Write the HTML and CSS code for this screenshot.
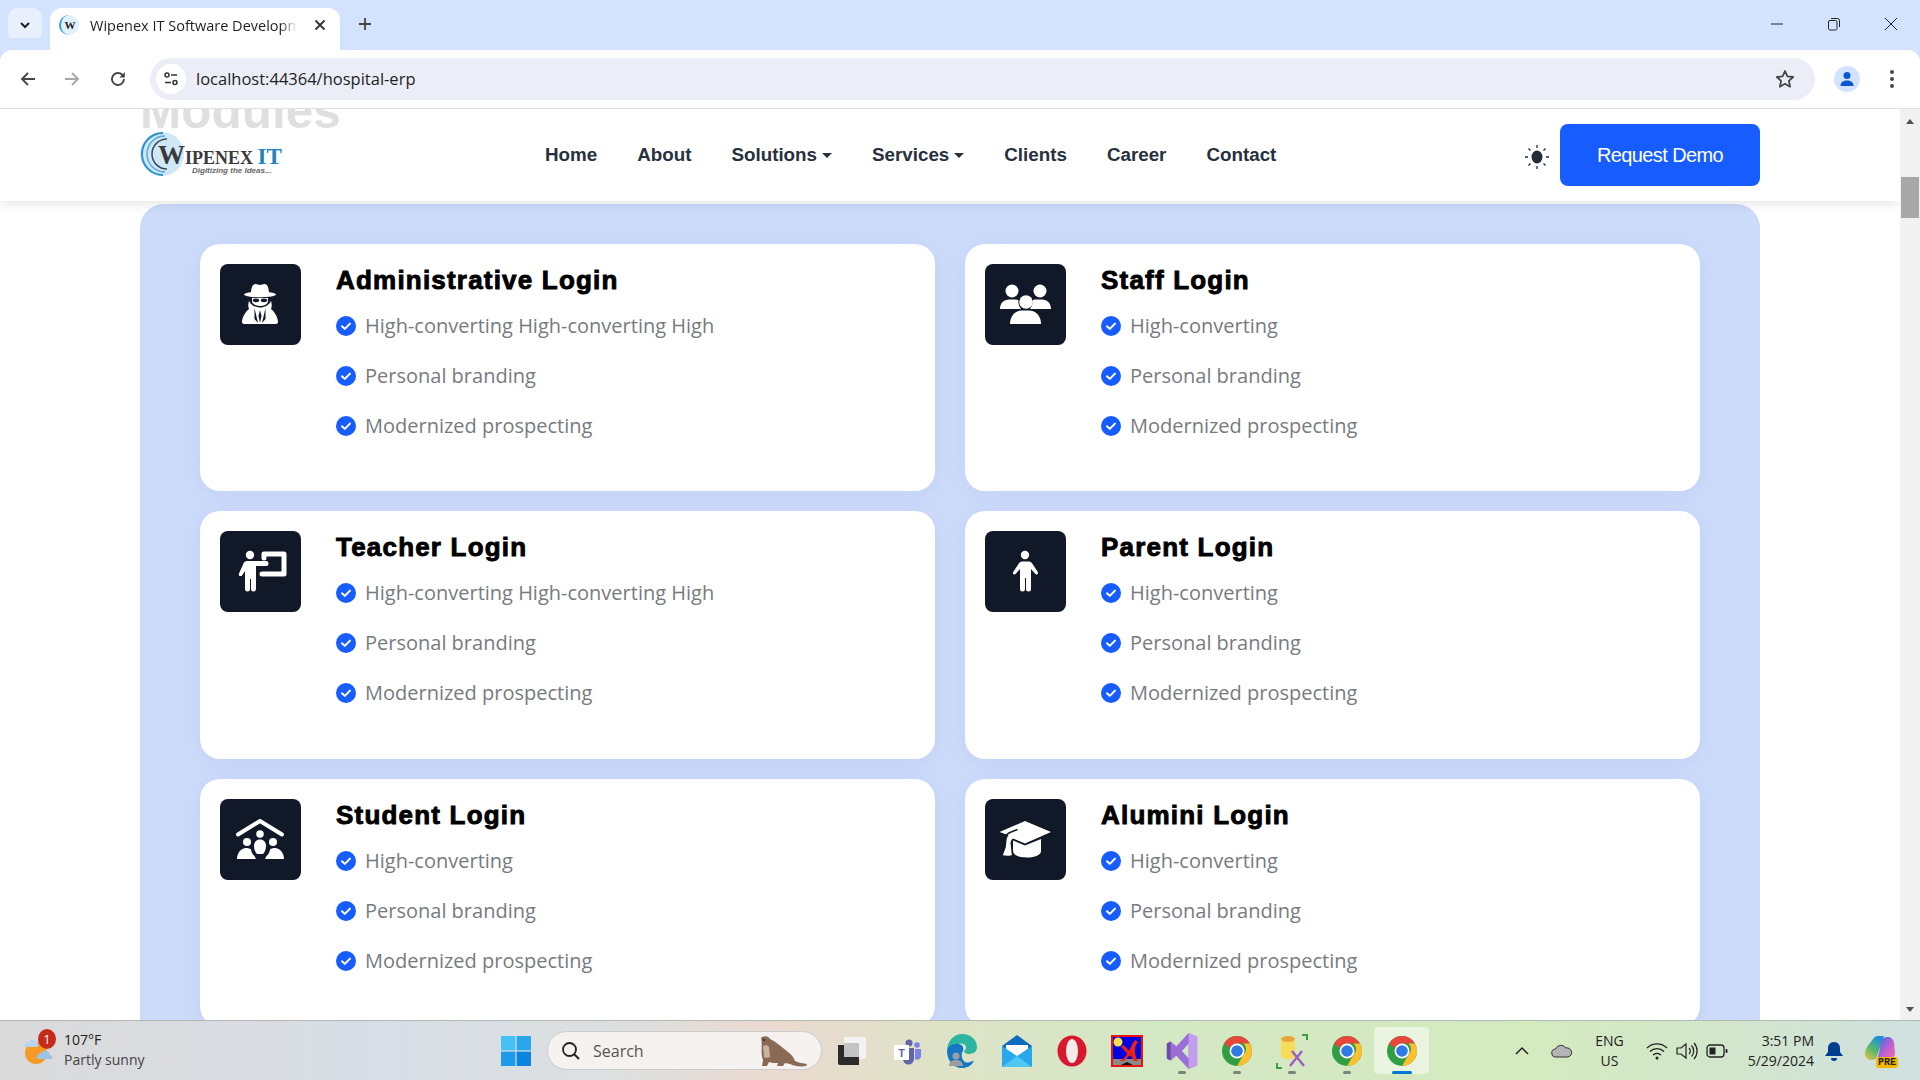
FILE: index.html
```html
<!DOCTYPE html>
<html lang="en">
<head>
    <meta charset="UTF-8">
    <meta name="viewport" content="width=device-width, initial-scale=1.0">
    <title>Wipenex IT Software Development</title>
    <link rel="stylesheet" href="styles.css">
</head>
<body>

    <svg class="defs" width="0" height="0">
        <symbol id="check" viewBox="0 0 20 20">
            <circle cx="10" cy="10" r="10" fill="#175cff"/>
            <path d="M6 10.2l2.8 2.7L14 7.6" fill="none" stroke="#fff" stroke-width="2" stroke-linecap="round" stroke-linejoin="round"/>
        </symbol>
        <symbol id="chrome" viewBox="0 0 32 32">
            <circle cx="16" cy="16" r="15" fill="#2f9e44"/>
            <path d="M3 8.5A15 15 0 0 1 29 8.5H16a7.5 7.5 0 0 0-7 4.6z" fill="#e8453c"/>
            <path d="M29 8.5A15 15 0 0 1 16 31l6.500-11.200A7.500 7.500 0 0 0 22.500 8.500z" fill="#fbc02d"/>
            <circle cx="16" cy="16" r="7.500" fill="#fff"/>
            <circle cx="16" cy="16" r="5.800" fill="#2f7ae5"/>
        </symbol>
    </svg>

    <header class="tabstrip">
        <div class="tab-list-btn">
            <svg width="14" height="14" viewBox="0 0 14 14"><path d="M3 5l4 4 4-4" fill="none" stroke="#1f1f1f" stroke-width="2"/></svg>
        </div>
        <div class="tab">
            <span class="favicon">W</span>
            <span class="tab-title">Wipenex IT Software Development</span>
            <svg class="tab-close" width="12" height="12" viewBox="0 0 12 12"><path d="M1.500 1.500l9 9M10.500 1.500l-9 9" stroke="#333" stroke-width="1.800"/></svg>
        </div>
        <svg class="new-tab" width="14" height="14" viewBox="0 0 14 14"><path d="M7 1v12M1 7h12" stroke="#444" stroke-width="1.800"/></svg>
        <div class="window-btns">
            <svg width="14" height="14" viewBox="0 0 14 14"><path d="M1 7h12" stroke="#222" stroke-width="1"/></svg>
            <svg width="14" height="14" viewBox="0 0 14 14"><rect x="1.500" y="3.500" width="8.500" height="9.500" rx="1.500" fill="none" stroke="#222"/><path d="M4 1.500h6.500a2 2 0 0 1 2 2V10" fill="none" stroke="#222"/></svg>
            <svg width="14" height="14" viewBox="0 0 14 14"><path d="M1 1l12 12M13 1L1 13" stroke="#222" stroke-width="1"/></svg>
        </div>
    </header>

    <div class="toolbar">
        <svg class="tool" width="18" height="18" viewBox="0 0 18 18"><path d="M16 9H3M9 3L3 9l6 6" fill="none" stroke="#474747" stroke-width="1.900"/></svg>
        <svg class="tool" width="18" height="18" viewBox="0 0 18 18"><path d="M2 9h13M9 3l6 6-6 6" fill="none" stroke="#a8a8a8" stroke-width="1.900"/></svg>
        <svg class="tool tool-reload" width="18" height="18" viewBox="0 0 18 18"><path d="M15 9a6 6 0 1 1-1.800-4.300L15 6.500" fill="none" stroke="#474747" stroke-width="1.900"/><path d="M15.800 2v5.500h-5.500z" fill="#474747"/></svg>
        <div class="urlbar">
            <span class="site-info">
                <svg width="16" height="16" viewBox="0 0 16 16"><circle cx="4" cy="4" r="2" fill="none" stroke="#333" stroke-width="1.500"/><path d="M8 4h6M2 11.500h6" stroke="#333" stroke-width="1.500"/><circle cx="12" cy="11.500" r="2" fill="none" stroke="#333" stroke-width="1.500"/></svg>
            </span>
            <span class="url">localhost:44364/hospital-erp</span>
            <svg class="star" width="20" height="20" viewBox="0 0 20 20"><path d="M10 2l2.400 5.400 5.800.6-4.300 3.900 1.200 5.800L10 14.700l-5.100 3 1.200-5.800L1.800 8l5.800-.6z" fill="none" stroke="#474747" stroke-width="1.800" stroke-linejoin="round"/></svg>
        </div>
        <div class="avatar">
            <svg width="16" height="16" viewBox="0 0 16 16"><circle cx="8" cy="4.500" r="3.500" fill="#0b57d0"/><path d="M1.500 15c0-4 3-5.500 6.500-5.500s6.500 1.500 6.500 5.500z" fill="#0b57d0"/></svg>
        </div>
        <div class="dots"><i></i><i></i><i></i></div>
    </div>

    <div class="viewport">
        <div class="page">
            <nav class="nav">
                <h1 class="behind-title">Modules</h1>
                <div class="logo">
                    <svg class="logo-mark" width="46" height="46" viewBox="0 0 46 46">
                        <circle cx="23" cy="23" r="22" fill="#cfe8f8"/>
                        <path d="M24 2A21 21 0 0 0 24 44" fill="none" stroke="#2b8fc9" stroke-width="2"/>
                        <path d="M26 5A18 18 0 0 0 26 41" fill="none" stroke="#5aa9d8" stroke-width="1.500"/>
                        <path d="M28 8A15 15 0 0 0 28 38" fill="none" stroke="#3b4a57" stroke-width="1.500"/>
                    </svg>
                    <div class="logo-text">
                        <div class="logo-name"><span class="logo-big">W</span>IPENEX <span class="logo-it">IT</span></div>
                        <div class="logo-tag">Digitizing the Ideas...</div>
                    </div>
                </div>
                <ul class="nav-links">
                    <li>Home</li>
                    <li>About</li>
                    <li class="has-caret">Solutions</li>
                    <li class="has-caret">Services</li>
                    <li>Clients</li>
                    <li>Career</li>
                    <li>Contact</li>
                </ul>
                <div class="nav-right">
                    <svg class="sun" width="24" height="24" viewBox="0 0 24 24">
                        <ellipse cx="12" cy="12" rx="5.500" ry="6.500" fill="#222b36"/>
                        <path d="M12 0v3M12 21v3M0 12h3M21 12h3M3.500 3.500l2 2M18.500 18.500l2 2M3.500 20.500l2-2M18.500 5.500l2-2" stroke="#222b36" stroke-width="1.300"/>
                    </svg>
                    <a class="btn-demo">Request Demo</a>
                </div>
            </nav>

            <main class="panel">
                <section class="card">
                    <div class="card-icon">
                        <svg viewBox="0 0 81 81" width="81" height="81" fill="#fff">
                            <path d="M31 30c0-6 1.500-10 4.500-10 2 0 2.800 1 4.500 1s2.500-1 4.500-1c3 0 4.500 4 4.500 10z"/>
                            <ellipse cx="40" cy="30.500" rx="16" ry="2.800"/>
                            <path d="M32 34h16v3c0 3-4 5-8 5s-8-2-8-5z"/>
                            <ellipse cx="36" cy="36.300" rx="3.200" ry="1.900" fill="#111827"/>
                            <ellipse cx="44" cy="36.300" rx="3.200" ry="1.900" fill="#111827"/>
                            <path d="M29 37c-1 3-1 5.500 0 8-4 3-7 9-7 13 0 1 1 2 2 2h32c1 0 2-1 2-2 0-4-3-10-7-13 1-2.500 1-5 0-8-2 4-6 6.500-11 6.500S31 41 29 37z"/>
                            <path d="M34.500 44l3.500 15-3.500-4zM45.500 44L42 59l3.500-4zM40 46l1.500 6-1.500 7-1.500-7z" fill="#111827"/>
                        </svg>
                    </div>
                    <div class="card-body">
                        <h3>Administrative Login</h3>
                        <ul class="ticks">
                            <li><svg class="tick"><use href="#check"/></svg>High-converting High-converting High</li>
                            <li><svg class="tick"><use href="#check"/></svg>Personal branding</li>
                            <li><svg class="tick"><use href="#check"/></svg>Modernized prospecting</li>
                        </ul>
                    </div>
                </section>

                <section class="card">
                    <div class="card-icon">
                        <svg viewBox="0 0 81 81" width="81" height="81" fill="#fff">
                            <circle cx="27" cy="27" r="6.500"/>
                            <circle cx="55" cy="27" r="6.500"/>
                            <path d="M15 45c0-6 4-9.500 9-9.500h6c2 0 3 .500 3.500 1-.5 3 .500 6 2.500 8.500zM66 45c0-6-4-9.500-9-9.500h-6c-2 0-3 .500-3.500 1 .5 3-.500 6-2.500 8.500z"/>
                            <circle cx="41" cy="38" r="6.800"/>
                            <path d="M25 60c0-8 5-13.500 12-13.500h7c7 0 12 5.500 12 13.500z"/>
                        </svg>
                    </div>
                    <div class="card-body">
                        <h3>Staff Login</h3>
                        <ul class="ticks">
                            <li><svg class="tick"><use href="#check"/></svg>High-converting</li>
                            <li><svg class="tick"><use href="#check"/></svg>Personal branding</li>
                            <li><svg class="tick"><use href="#check"/></svg>Modernized prospecting</li>
                        </ul>
                    </div>
                </section>

                <section class="card">
                    <div class="card-icon">
                        <svg viewBox="0 0 81 81" width="81" height="81">
                            <path d="M44 27v-4h20v20H42" fill="none" stroke="#fff" stroke-width="5" stroke-linejoin="round" stroke-linecap="round"/>
                            <circle cx="30" cy="24" r="4.200" fill="#fff"/>
                            <path d="M27 30h19a2.500 2.500 0 0 1 0 5H36v23a2.500 2.500 0 0 1-5 0V48h-1v10a2.500 2.500 0 0 1-5 0V40l-3 4.500c-1.500 1.500-4 0-3-2l4-9c.800-2 2-3.500 4-3.500z" fill="#fff"/>
                        </svg>
                    </div>
                    <div class="card-body">
                        <h3>Teacher Login</h3>
                        <ul class="ticks">
                            <li><svg class="tick"><use href="#check"/></svg>High-converting High-converting High</li>
                            <li><svg class="tick"><use href="#check"/></svg>Personal branding</li>
                            <li><svg class="tick"><use href="#check"/></svg>Modernized prospecting</li>
                        </ul>
                    </div>
                </section>

                <section class="card">
                    <div class="card-icon">
                        <svg viewBox="0 0 81 81" width="81" height="81" fill="#fff">
                            <circle cx="40" cy="24" r="4.200"/>
                            <path d="M36 30.500h8c1.500 0 2.500 1 3.200 2l5.600 8.500c1 1.800-1.200 3.300-2.600 1.800L46 38v20a2.500 2.500 0 0 1-5 0V47h-1v11a2.500 2.500 0 0 1-5 0V38l-4.200 4.800c-1.400 1.500-3.600 0-2.600-1.800l5.600-8.500c.7-1 1.700-2 3.200-2z"/>
                        </svg>
                    </div>
                    <div class="card-body">
                        <h3>Parent Login</h3>
                        <ul class="ticks">
                            <li><svg class="tick"><use href="#check"/></svg>High-converting</li>
                            <li><svg class="tick"><use href="#check"/></svg>Personal branding</li>
                            <li><svg class="tick"><use href="#check"/></svg>Modernized prospecting</li>
                        </ul>
                    </div>
                </section>

                <section class="card">
                    <div class="card-icon">
                        <svg viewBox="0 0 81 81" width="81" height="81" fill="#fff">
                            <path d="M18 35.500L40 22l22 13.500" fill="none" stroke="#fff" stroke-width="4" stroke-linecap="round" stroke-linejoin="round"/>
                            <circle cx="40" cy="35" r="3.800"/>
                            <path d="M34 47c0-4 2.500-6.500 6-6.500s6 2.500 6 6.500c0 4-2 7-3 8h-6c-1-1-3-4-3-8z"/>
                            <circle cx="27" cy="43" r="4"/>
                            <circle cx="53" cy="43" r="4"/>
                            <path d="M17 60c0-6 4-11 9-11 2 0 4 .500 5 1.500.5 3 1.500 5 3.500 6.500l1.500 3zM64 60c0-6-4-11-9-11-2 0-4 .500-5 1.500-.5 3-1.500 5-3.500 6.500l-1.500 3z"/>
                        </svg>
                    </div>
                    <div class="card-body">
                        <h3>Student Login</h3>
                        <ul class="ticks">
                            <li><svg class="tick"><use href="#check"/></svg>High-converting</li>
                            <li><svg class="tick"><use href="#check"/></svg>Personal branding</li>
                            <li><svg class="tick"><use href="#check"/></svg>Modernized prospecting</li>
                        </ul>
                    </div>
                </section>

                <section class="card">
                    <div class="card-icon">
                        <svg viewBox="0 0 81 81" width="81" height="81" fill="#fff">
                            <path d="M40 22l26 11-26 11.500-12-5c-1.500 1-2.300 2.500-2.500 4.500l1.300 12c0 .800-5.800 1-9 .300l3-8 .7-7c.2-2 1-4 2-5l-9-3.300z"/>
                            <path d="M19.500 37c4-3 8-5 13-6.500" fill="none" stroke="#111827" stroke-width="1.500"/>
                            <path d="M28 41.500l12 5 16-6.500v12c0 4-6 6.500-14 6.500-8 0-14-2.500-14-6.500z"/>
                        </svg>
                    </div>
                    <div class="card-body">
                        <h3>Alumini Login</h3>
                        <ul class="ticks">
                            <li><svg class="tick"><use href="#check"/></svg>High-converting</li>
                            <li><svg class="tick"><use href="#check"/></svg>Personal branding</li>
                            <li><svg class="tick"><use href="#check"/></svg>Modernized prospecting</li>
                        </ul>
                    </div>
                </section>
            </main>
        </div>

        <div class="scrollbar">
            <span class="arrow-up"></span>
            <span class="thumb"></span>
            <span class="arrow-down"></span>
        </div>
    </div>

    <footer class="taskbar">
        <div class="weather">
            <span class="weather-icon">
                <svg width="32" height="34" viewBox="0 0 32 34">
                    <circle cx="12" cy="20" r="11" fill="#f59a23"/>
                    <path d="M1 14a4 4 0 0 1 4-5 5 5 0 0 1 9 2v3z" fill="#b8d4ee"/>
                    <path d="M13 25a4 4 0 0 1 4-5 5 5 0 0 1 9 2 3 3 0 0 1 2 4H13z" fill="#9cc3e8"/>
                </svg>
                <b class="badge">1</b>
            </span>
            <div class="weather-text">
                <div>107°F</div>
                <div class="weather-sub">Partly sunny</div>
            </div>
        </div>
        <svg class="win-logo" width="30" height="30" viewBox="0 0 30 30">
            <path d="M0 0h14.400v14.400H0z" fill="#45c1f5"/>
            <path d="M15.600 0H30v14.400H15.600z" fill="#2aa6ee"/>
            <path d="M0 15.600h14.400V30H0z" fill="#1d9aea"/>
            <path d="M15.600 15.600H30V30H15.600z" fill="#0a84dc"/>
        </svg>
        <div class="search">
            <svg width="20" height="20" viewBox="0 0 20 20"><circle cx="8.500" cy="8.500" r="6.500" fill="none" stroke="#222" stroke-width="1.800"/><path d="M13 13l5 5" stroke="#222" stroke-width="2"/></svg>
            <span>Search</span>
            <svg class="otter" width="54" height="34" viewBox="0 0 54 34">
                <path d="M6 4c3-3 8-2 9 1 5 2 12 8 18 13 4 3 6 6 7 9 4 2 8 2 12 3l-1 2c-6 1-12 0-16-2l-5-1-2 3h-6l1-3c-3 0-7 0-9-1l-2 4H7l1-6C5 17 8 12 6 4z" fill="#8a6a55"/>
                <path d="M8 12c2-1 5-1 6 1l1 10c-2 1-5 1-6 0z" fill="#c8b3a2"/>
                <circle cx="9" cy="6" r="1" fill="#222"/>
            </svg>
        </div>

        <div class="apps">
            <span class="app">
                <svg width="32" height="32" viewBox="0 0 32 32"><rect x="8" y="2" width="22" height="22" rx="2" fill="#f3f3f3"/><path d="M2 10h21v20H4a2 2 0 0 1-2-2z" fill="#2b2b2b"/><path d="M8 8h15v14H8z" fill="#c4c4c4"/></svg>
            </span>
            <span class="app">
                <svg width="32" height="32" viewBox="0 0 32 32"><circle cx="18" cy="8" r="3.500" fill="#6264a7"/><circle cx="26" cy="10" r="2.800" fill="#7b83eb"/><path d="M12 13h11v11a5.500 5.500 0 0 1-11 0z" fill="#6264a7"/><path d="M24 14h6v8a4 4 0 0 1-6 2z" fill="#7b83eb"/><rect x="3" y="10" width="15" height="15" fill="#fff"/><text class="teams-t" x="10.500" y="22">T</text></svg>
            </span>
            <span class="app">
                <svg width="32" height="36" viewBox="0 0 32 36"><path d="M1 18C1 8 8 1 16 1c9 0 15 6 15 13 0 5-4 7-8 7-3 0-5-1-5-3 2-1 3-3 1-6-2-2-6-2-9 0-4 2-7 4-9 6z" fill="#2cb5a0"/><path d="M1 18c1-5 6-8 12-7 4 1 5 4 4 7-3 3-1 14 7 11 2-1 3-1 4-1-3 5-7 7-12 7C8 35 1 28 1 18z" fill="#1476c6"/><circle cx="10" cy="23" r="3.500" fill="#9e9e9e"/><path d="M3 33c0-4 3-6 7-6s7 2 7 6z" fill="#9e9e9e"/></svg>
            </span>
            <span class="app">
                <svg width="32" height="34" viewBox="0 0 32 34"><path d="M1 12L16 1l15 11v21H1z" fill="#0f6cbd"/><path d="M5 11h22v8l-11 6-11-6z" fill="#fff"/><path d="M1 12l15 10 15-10v21H1z" fill="#28a8ea"/><path d="M1 33l15-11 15 11z" fill="#50c6f2"/></svg>
            </span>
            <span class="app">
                <svg width="30" height="32" viewBox="0 0 30 32"><ellipse cx="15" cy="16" rx="14.500" ry="15.500" fill="#d8182d"/><ellipse cx="15" cy="16" rx="6" ry="12" fill="#f5eaea"/></svg>
            </span>
            <span class="app">
                <svg width="32" height="32" viewBox="0 0 32 32"><rect x="1" y="1" width="30" height="30" fill="#0000e0" stroke="#ee1111" stroke-width="2"/><circle cx="7" cy="7" r="4.500" fill="#f4e04d"/><path d="M2 24h28v6H2z" fill="#8a8a8a"/><path d="M8 26c6-2 8-7 11-12 2-4 3-7 5-9l3 2c-3 3-4 8-2 15l2 4h-4c-2-3-3-6-3-9-2 3-4 7-7 9z" fill="#ee2211"/><path d="M12 10c3 2 6 5 9 10l-2 2c-3-4-6-7-9-10z" fill="#ee2211"/><path d="M10 30l6-3 6 3z" fill="#111"/></svg>
            </span>
            <span class="app has-dot">
                <svg width="32" height="36" viewBox="0 0 32 38"><path d="M23 0l9 4v30l-9 4-13-14-6 5-4-2V11l4-2 6 5zM23 11l-7 8 7 8z" fill="#9a6fd6"/><path d="M23 0l9 4v30l-9 4z" fill="#c39df0"/><path d="M0 11l4-2v20l-4-2z" fill="#6a4aa8"/></svg>
            </span>
            <span class="app has-dot"><svg width="32" height="32"><use href="#chrome"/></svg></span>
            <span class="app has-dot">
                <svg width="34" height="36" viewBox="0 0 34 36"><path d="M6 6c0-2 3-3 7-3s7 1 7 3v17c0 2-3 3-7 3s-7-1-7-3z" fill="#f6dc58"/><ellipse cx="13" cy="6" rx="7" ry="3" fill="#e6a33e"/><path d="M27 2h5v5M2 30v5h5" fill="none" stroke="#3f9b3f" stroke-width="2"/><path d="M15 33l12-15M29 33L17 18" stroke="#a060c0" stroke-width="2.500"/></svg>
            </span>
            <span class="app has-dot"><svg width="32" height="32"><use href="#chrome"/></svg></span>
            <span class="app is-active"><svg width="32" height="32"><use href="#chrome"/></svg></span>
        </div>

        <div class="tray">
            <svg class="tray-caret" width="14" height="10" viewBox="0 0 14 10"><path d="M1 8l6-6 6 6" fill="none" stroke="#222" stroke-width="1.500"/></svg>
            <svg class="tray-cloud" width="22" height="14" viewBox="0 0 22 14"><path d="M5 13a4 4 0 0 1-.5-8A6 6 0 0 1 15 4a4.500 4.500 0 0 1 2 9z" fill="#b4b4b4" stroke="#333"/></svg>
            <div class="lang">ENG<br>US</div>
            <div class="status-icons">
                <svg width="22" height="18" viewBox="0 0 22 18"><path d="M1 6a14 14 0 0 1 20 0M4 9.500a10 10 0 0 1 14 0M7 13a6 6 0 0 1 8 0" fill="none" stroke="#222" stroke-width="1.300"/><circle cx="11" cy="16" r="1.500" fill="#222"/></svg>
                <svg width="22" height="18" viewBox="0 0 22 18"><path d="M1 6h4l5-4v14l-5-4H1z" fill="none" stroke="#222" stroke-width="1.200"/><path d="M13 6a4 4 0 0 1 0 6M15.500 3.500a8 8 0 0 1 0 11M18 1a12 12 0 0 1 0 16" fill="none" stroke="#222" stroke-width="1.200"/></svg>
                <svg width="22" height="14" viewBox="0 0 22 14"><rect x="1" y="1" width="17" height="12" rx="3" fill="none" stroke="#222" stroke-width="1.300"/><rect x="3.500" y="3.500" width="6" height="7" fill="#222"/><rect x="19.500" y="5" width="2" height="4" rx="1" fill="#222"/></svg>
            </div>
            <div class="clock"><div>3:51 PM</div><div>5/29/2024</div></div>
            <svg class="bell" width="18" height="20" viewBox="0 0 18 20"><path d="M9 1c-4 0-6 3-6 6v4l-3 4h18l-3-4V7c0-3-2-6-6-6z" fill="#003e92"/><path d="M6 17a3 3 0 0 0 6 0z" fill="#003e92"/></svg>
            <span class="copilot">
                <svg width="30" height="26" viewBox="0 0 30 26">
                    <defs>
                        <linearGradient id="cpA" x1="0" y1="1" x2="0.600" y2="0"><stop offset="0" stop-color="#f5c242"/><stop offset=".5" stop-color="#58b86a"/><stop offset="1" stop-color="#1e8fe0"/></linearGradient>
                        <linearGradient id="cpB" x1="0" y1="0" x2="1" y2="1"><stop offset="0" stop-color="#2a6fe0"/><stop offset=".6" stop-color="#c85fd0"/><stop offset="1" stop-color="#f06a9a"/></linearGradient>
                    </defs>
                    <path d="M8 3c1-2 3-3 5-3h6l-7 20c-1 3-3 4-5 4-4 0-7-2-7-6 0-3 1-5 2-7z" fill="url(#cpA)"/>
                    <path d="M16 6c1-3 3-5 6-5h1c3 0 5 2 6 5l1 11c0 4-3 6-6 6H12c2-4 3-12 4-17z" fill="url(#cpB)"/>
                </svg>
                <b class="pre">PRE</b>
            </span>
        </div>
    </footer>

</body>
</html>
```

FILE: styles.css
```css
* {
    box-sizing: border-box;
}
html, body {
    margin: 0;
    height: 100%;
}
body {
    display: flex;
    flex-direction: column;
    height: 100vh;
    overflow: hidden;
    font-family: "Open Sans", sans-serif;
    background: #fff;
}
ul {
    list-style: none;
    margin: 0;
    padding: 0;
}
.defs {
    position: absolute;
}

/* browser tabs */
.tabstrip {
    display: flex;
    align-items: flex-end;
    flex: 0 0 50px;
    background: #d3e3fd;
    padding-left: 8px;
}
.tab-list-btn {
    display: flex;
    align-items: center;
    justify-content: center;
    align-self: flex-start;
    width: 34px;
    height: 34px;
    margin-top: 8px;
    border-radius: 10px;
    background: #e9f0fd;
}
.tab {
    position: relative;
    display: flex;
    align-items: center;
    width: 290px;
    height: 42px;
    margin-left: 8px;
    padding: 0 14px 8px 9px;
    border-radius: 12px 12px 0 0;
    background: #fff;
}
.favicon {
    flex: 0 0 20px;
    height: 20px;
    margin-right: 11px;
    border-radius: 50%;
    border-left: 2px solid #3c9ad6;
    background: #dff0fb;
    font: bold 11px/20px "Liberation Serif", serif;
    text-align: center;
    color: #222;
}
.tab-title {
    flex: 1;
    overflow: hidden;
    white-space: nowrap;
    font-size: 14.500px;
    color: #1f1f1f;
    -webkit-mask-image: linear-gradient(90deg, #000 92%, transparent);
    mask-image: linear-gradient(90deg, #000 92%, transparent);
}
.tab-close {
    margin-left: 17px;
}
.new-tab {
    align-self: flex-start;
    margin: 17px 0 0 18px;
}
.window-btns {
    display: flex;
    gap: 43px;
    align-self: flex-start;
    margin: 17px 22px 0 auto;
}

/* browser toolbar */
.toolbar {
    display: flex;
    align-items: center;
    flex: 0 0 59px;
    padding: 0 0 1px 19px;
    border-bottom: 1px solid #e0e0e0;
    border-radius: 12px 12px 0 0;
    background: #fff;
    box-shadow: 0 -12px 0 #d3e3fd;
}
.tool {
    margin-right: 26px;
}
.tool-reload {
    margin-left: 2px;
}
.urlbar {
    display: flex;
    align-items: center;
    width: 1665px;
    height: 42px;
    margin-left: -3px;
    padding: 0 20px 0 6px;
    border-radius: 21px;
    background: #ebeef7;
}
.site-info {
    display: flex;
    align-items: center;
    justify-content: center;
    width: 30px;
    height: 30px;
    border-radius: 50%;
    background: #fff;
}
.url {
    margin-left: 10px;
    font-size: 16.500px;
    color: #1f1f1f;
}
.star {
    margin-left: auto;
}
.avatar {
    display: flex;
    align-items: center;
    justify-content: center;
    width: 26px;
    height: 26px;
    margin-left: 19px;
    border-radius: 50%;
    background: #d3e3fd;
}
.dots {
    display: flex;
    flex-direction: column;
    gap: 3px;
    margin-left: 30px;
}
.dots i {
    width: 4px;
    height: 4px;
    border-radius: 50%;
    background: #474747;
}

/* page */
.viewport {
    display: flex;
    flex: 1;
    min-height: 0;
}
.page {
    flex: 1;
    overflow: hidden;
    background: #fff;
}
.nav {
    position: relative;
    z-index: 2;
    display: flex;
    align-items: center;
    height: 92px;
    padding: 0 140px;
    background: rgba(255, 255, 255, 0.9);
    box-shadow: 0 2px 12px rgba(0, 0, 0, 0.12);
}
.behind-title {
    position: absolute;
    left: 140px;
    top: -17px;
    z-index: -1;
    margin: 0;
    font: bold 49.500px/38px "Liberation Sans", Arial, sans-serif;
    color: #dfdfdf;
}
.logo {
    display: flex;
    align-items: flex-start;
    width: 142px;
    height: 46px;
    margin-right: 263px;
    margin-top: -2px;
    margin-left: -1px;
}
.logo-mark {
    flex: 0 0 46px;
}
.logo-text {
    margin-left: -27px;
    padding-top: 14px;
    white-space: nowrap;
}
.logo-name {
    font: bold 18px/20px "Liberation Serif", serif;
    color: #3a3a3a;
}
.logo-big {
    font-size: 27px;
}
.logo-it {
    font-size: 23px;
    color: #2384bd;
}
.logo-tag {
    margin: -2px 0 0 34px;
    font: italic bold 8px/10px "Liberation Sans", sans-serif;
    color: #666;
}
.nav-links {
    display: flex;
    gap: 40px;
    margin-left: 1px;
    font: bold 18.800px "Liberation Sans", Arial, sans-serif;
    color: #27303d;
}
.has-caret::after {
    content: "";
    display: inline-block;
    margin-left: 5px;
    vertical-align: 3px;
    border-top: 5px solid #27303d;
    border-left: 5px solid transparent;
    border-right: 5px solid transparent;
}
.nav-right {
    display: flex;
    align-items: center;
    margin-left: auto;
}
.sun {
    margin: 4px 11px 0 0;
}
.btn-demo {
    display: flex;
    align-items: center;
    justify-content: center;
    width: 200px;
    height: 62px;
    border-radius: 8px;
    background: #175cff;
    font: 20px "Liberation Sans", Arial, sans-serif;
    letter-spacing: -0.600px;
    color: #fff;
}

/* login cards */
.panel {
    display: grid;
    grid-template-columns: 735px 735px;
    grid-template-rows: 247px 248px 247px;
    gap: 20px 30px;
    height: 900px;
    margin: 3px 140px 0;
    padding: 40px 60px;
    border-radius: 24px 24px 0 0;
    background: #cddbfb;
}
.card {
    display: flex;
    gap: 35px;
    padding: 20px;
    border-radius: 20px;
    background: #fff;
    box-shadow: 0 4px 24px rgba(40, 60, 120, 0.06);
}
.card-icon {
    flex: 0 0 81px;
    height: 81px;
    border-radius: 8px;
    background: #111827;
}
.card-icon svg {
    display: block;
}
.card h3 {
    margin: 0 0 16px;
    font: bold 26px/32px "Liberation Sans", Arial, sans-serif;
    letter-spacing: 1.200px;
    color: #000;
    -webkit-text-stroke: 0.900px #000;
}
.ticks {
    font-size: 20px;
    line-height: 28px;
    color: #777b80;
}
.ticks li {
    display: flex;
    align-items: center;
    gap: 9px;
    margin-bottom: 21.800px;
}
.tick {
    flex: 0 0 20px;
    width: 20px;
    height: 20px;
}

/* page scrollbar */
.scrollbar {
    position: relative;
    flex: 0 0 20px;
    background: #f1f1f1;
}
.thumb {
    position: absolute;
    left: 1px;
    right: 1px;
    top: 68px;
    height: 41px;
    background: #a8a8a8;
}
.arrow-up, .arrow-down {
    position: absolute;
    left: 6px;
    border-left: 4px solid transparent;
    border-right: 4px solid transparent;
}
.arrow-up {
    top: 10px;
    border-bottom: 5px solid #505050;
}
.arrow-down {
    bottom: 8px;
    border-top: 5px solid #505050;
}

/* windows taskbar */
.taskbar {
    display: flex;
    align-items: center;
    flex: 0 0 60px;
    border-top: 1px solid #b4b8b2;
    background: linear-gradient(90deg, #dadada 0%, #d8dde6 20%, #dce0e0 32%, #ead9d0 40%, #e0e2c8 48%, #d3e8c4 60%, #d4eabf 80%, #d2e5cf 92%, #cfe0e0 100%);
    font-size: 14px;
    color: #222;
}
.weather {
    display: flex;
    align-items: center;
    flex: 0 0 501px;
    padding-left: 24px;
}
.weather-icon {
    position: relative;
    width: 40px;
    height: 36px;
}
.badge {
    position: absolute;
    left: 14px;
    top: -4px;
    width: 18px;
    height: 20px;
    border-radius: 50%;
    background: #c42b1c;
    font: 13px/20px "Open Sans", sans-serif;
    text-align: center;
    color: #fff;
}
.weather-text {
    margin-top: -2px;
    line-height: 20px;
    font-size: 14px;
}
.weather-sub {
    color: #444;
}
.search {
    display: flex;
    align-items: center;
    flex: 0 0 275px;
    height: 39px;
    margin-left: 16px;
    padding: 0 12px 0 13px;
    border: 1px solid #ccc;
    border-radius: 20px;
    background: #f5f2ef;
    font-size: 16px;
    color: #555;
}
.search span {
    margin-left: 12px;
}
.otter {
    margin-left: auto;
}
.apps {
    display: flex;
    margin-left: 2px;
}
.app {
    position: relative;
    display: flex;
    align-items: center;
    justify-content: center;
    width: 55px;
    height: 47px;
}
.has-dot::after, .is-active::after {
    content: "";
    position: absolute;
    left: 50%;
    bottom: 0;
    height: 3px;
    border-radius: 2px;
    transform: translateX(-50%);
}
.has-dot::after {
    width: 8px;
    background: #7d8378;
}
.is-active {
    border-radius: 4px;
    background: rgba(255, 255, 255, 0.5);
}
.is-active::after {
    width: 20px;
    background: #0078d4;
}
.teams-t {
    font: bold 11px "Liberation Sans", sans-serif;
    fill: #6264a7;
    text-anchor: middle;
}
.tray {
    display: flex;
    align-items: center;
    margin-left: auto;
    padding-right: 24px;
}
.tray-cloud {
    margin-left: 22px;
}
.lang {
    margin-left: 22px;
    line-height: 20px;
    text-align: center;
}
.status-icons {
    display: flex;
    align-items: center;
    gap: 8px;
    margin-left: 22px;
}
.clock {
    margin-left: 20px;
    line-height: 20px;
    text-align: right;
}
.bell {
    margin-left: 11px;
}
.copilot {
    position: relative;
    width: 30px;
    height: 30px;
    margin-left: 22px;
    margin-right: 1px;
}
.pre {
    position: absolute;
    right: -3px;
    bottom: -2px;
    padding: 0 2px;
    border-radius: 3px;
    background: #f5b800;
    font: bold 10px/11px "Liberation Mono", monospace;
    color: #222;
}
```
